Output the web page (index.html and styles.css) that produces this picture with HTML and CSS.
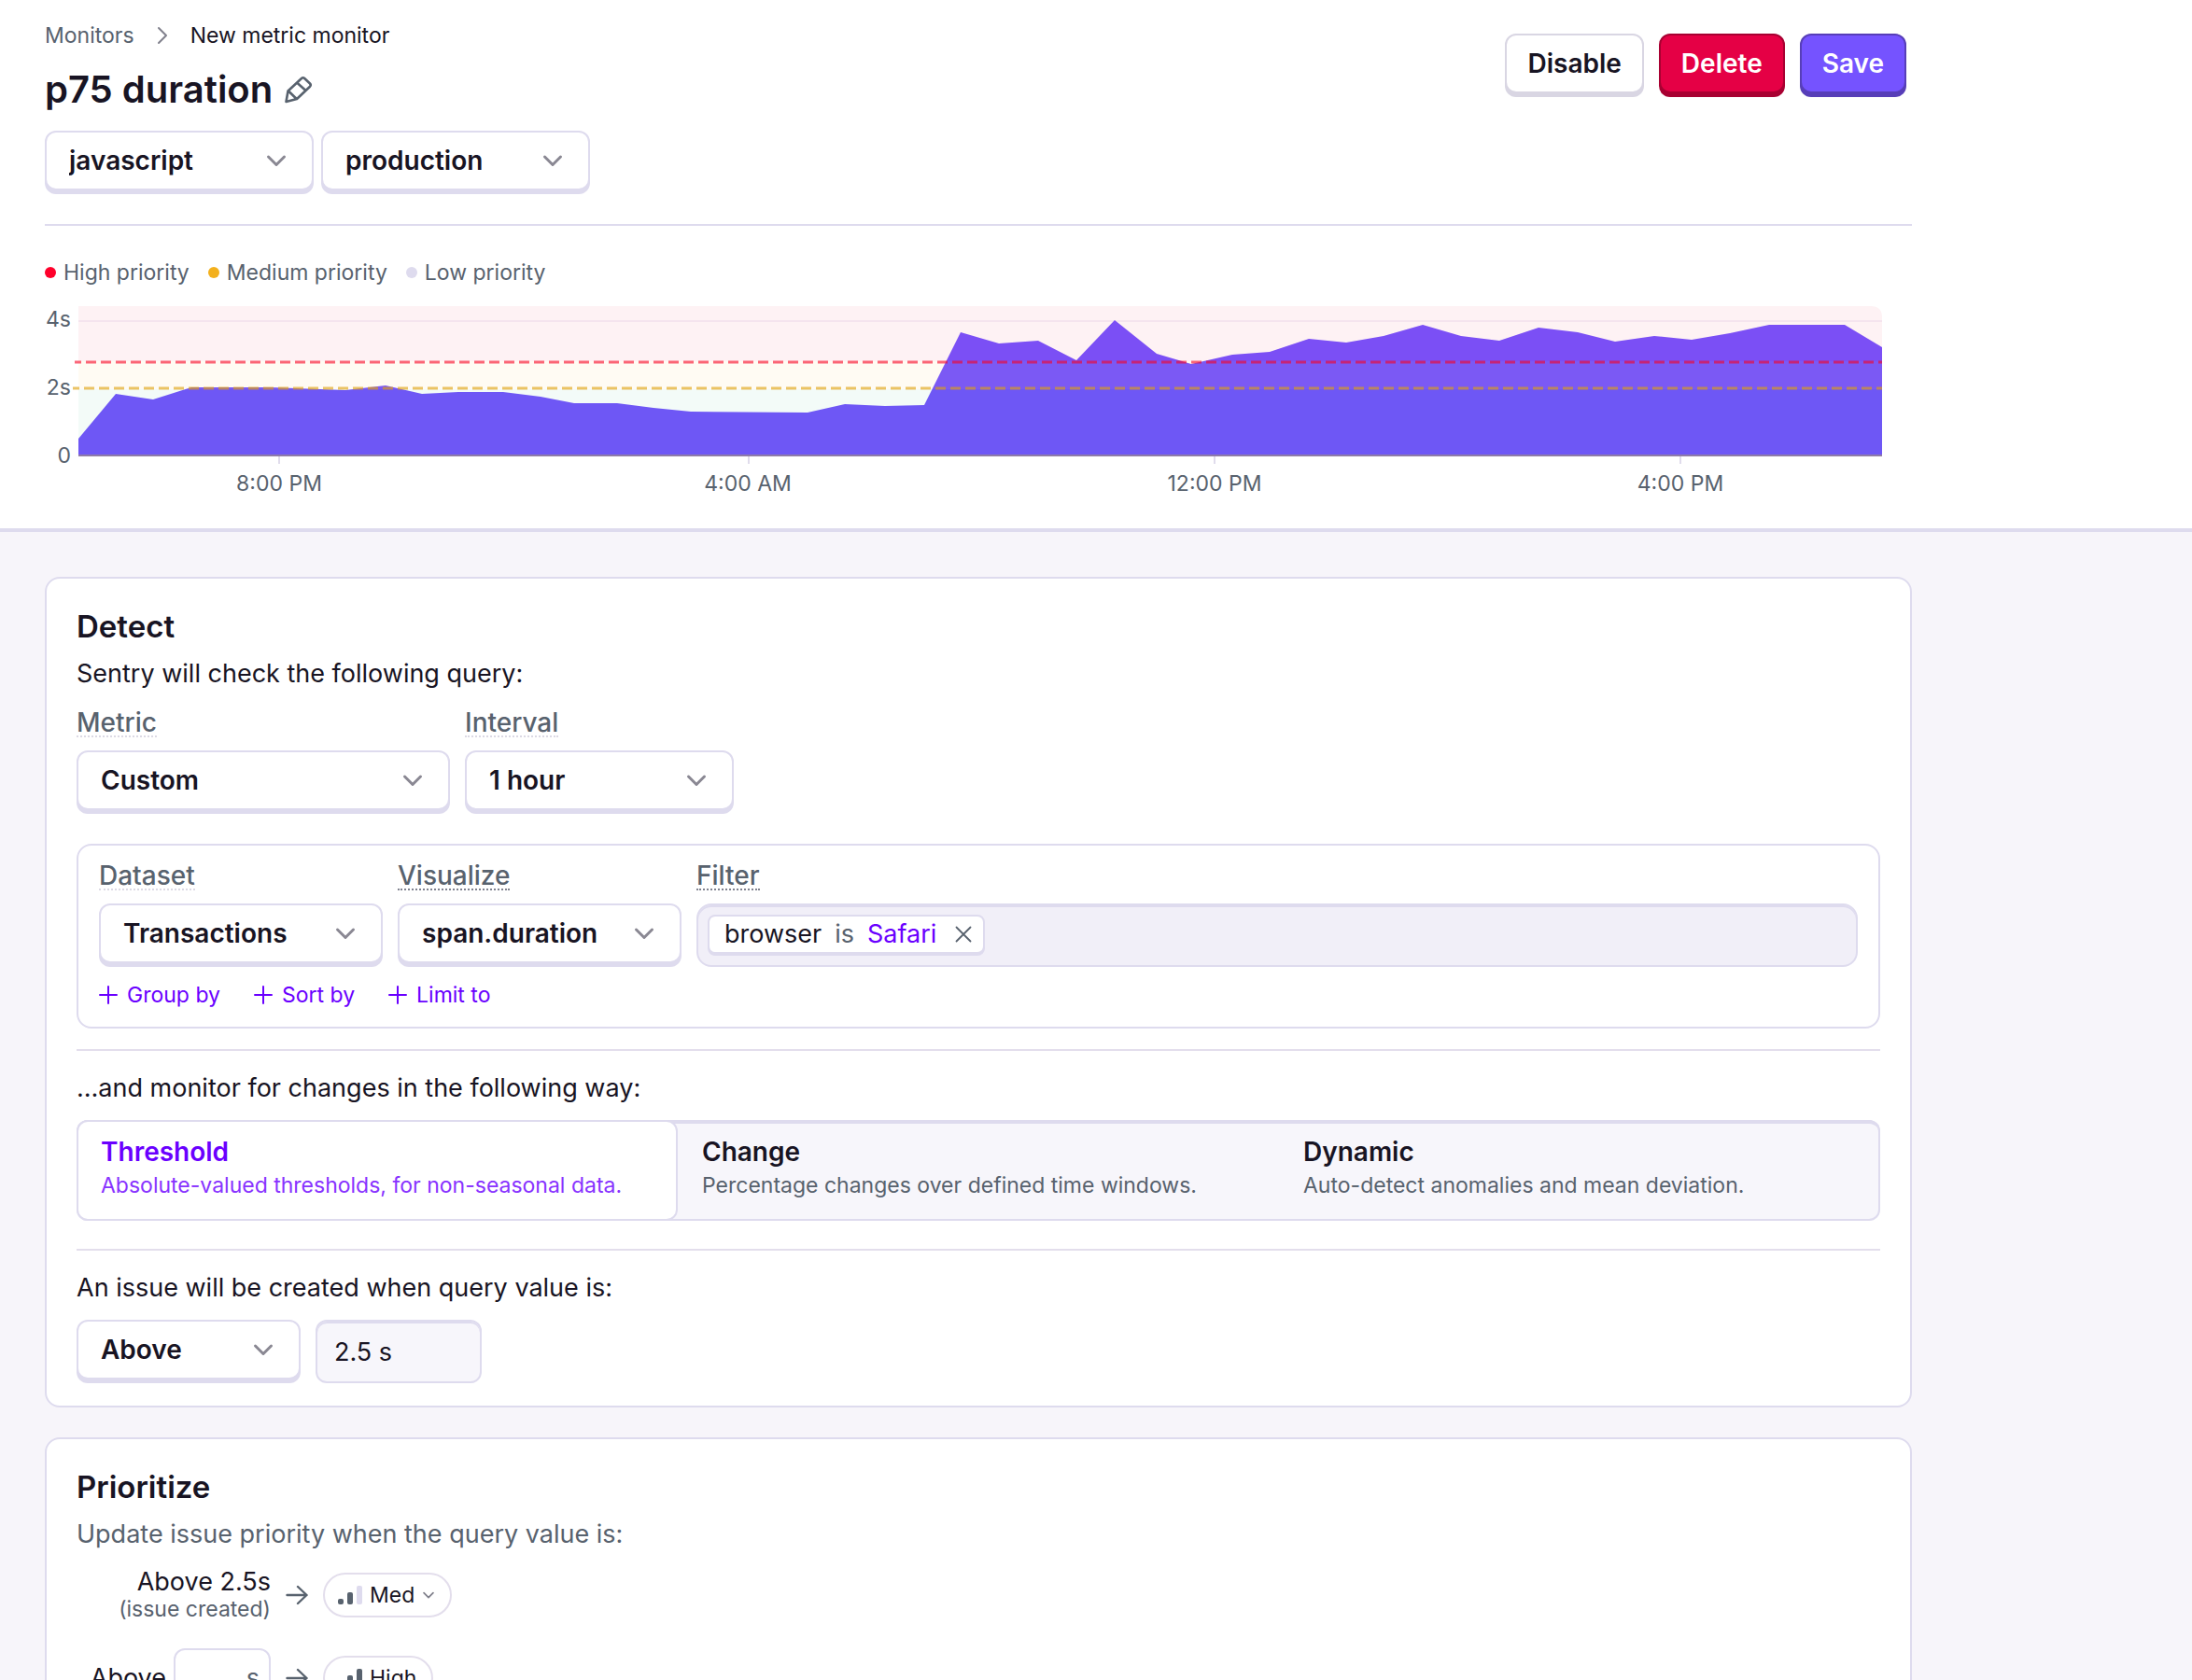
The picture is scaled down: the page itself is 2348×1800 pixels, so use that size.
FILE: index.html
```html
<!DOCTYPE html>
<html lang="en">
<head>
<meta charset="utf-8">
<meta name="viewport" content="width=device-width, initial-scale=1">
<title>p75 duration - New metric monitor</title>
<link rel="stylesheet" href="styles.css">
</head>
<body>
<svg class="sprite" aria-hidden="true">
  <symbol id="chevron" viewBox="0 0 24 24"><path d="M3.500 8l8.500 8.500L20.500 8" fill="none" stroke="currentColor" stroke-width="3" stroke-linecap="round" stroke-linejoin="round"/></symbol>
  <symbol id="plus" viewBox="0 0 20 20"><path d="M10 1v18M1 10h18" fill="none" stroke="currentColor" stroke-width="2" stroke-linecap="round"/></symbol>
  <symbol id="arrow" viewBox="0 0 24 24"><path d="M1.500 12h21M13 3l9.500 9-9.500 9" fill="none" stroke="currentColor" stroke-width="2.400" stroke-linecap="round" stroke-linejoin="round"/></symbol>
</svg>

<header class="top">
  <div class="container">
    <div class="top-row">
      <div class="top-info">
        <nav class="crumbs" aria-label="Breadcrumb">
          <a href="#">Monitors</a>
          <svg class="crumb-sep" viewBox="0 0 12 20" aria-hidden="true"><path d="M2 2l8 8-8 8" fill="none" stroke="currentColor" stroke-width="2" stroke-linecap="round" stroke-linejoin="round"/></svg>
          <span>New metric monitor</span>
        </nav>
        <div class="title-row">
          <h1>p75 duration</h1>
          <button class="icon-btn" type="button" aria-label="Edit name">
            <svg viewBox="0 0 32 32"><path d="M2.500 29l2-11.500L19 4q1.600-1.500 3.200 0l5.800 5.500q1.500 1.600 0 3.200L14 26zM14 8.500l9.500 8.500M5 17.500l8.700 8.500" fill="none" stroke="currentColor" stroke-width="2.600" stroke-linejoin="round"/></svg>
          </button>
        </div>
        <div class="row tight">
          <div class="select w-md">
            <select aria-label="Project"><option>javascript</option></select>
            <svg aria-hidden="true"><use href="#chevron"/></svg>
          </div>
          <div class="select w-md">
            <select aria-label="Environment"><option>production</option></select>
            <svg aria-hidden="true"><use href="#chevron"/></svg>
          </div>
        </div>
      </div>
      <div class="actions">
        <button class="btn" type="button">Disable</button>
        <button class="btn danger" type="button">Delete</button>
        <button class="btn primary" type="button">Save</button>
      </div>
    </div>

    <ul class="legend">
      <li class="high">High priority</li>
      <li class="medium">Medium priority</li>
      <li class="low">Low priority</li>
    </ul>
    <svg class="chart" viewBox="48 320 2000 220" role="img" aria-label="p75 duration over time">
      <defs>
        <clipPath id="series"><path d="M84 488V470L124 422L164 428L205 415L290 415L370 418L413 413L452 422L491 420L539 420L579 425L615 432L661 432L700 437L740 441L865 442L905 433L948 435L990 434L1029 356L1070 368L1112 365L1153 386L1194 343L1239 379L1276 390L1320 380L1360 377L1402 363L1442 367L1482 360L1524 348L1565 360L1606 365L1648 351L1690 356L1730 366L1772 360L1812 364L1853 357L1895 348L1976 348L2016 372V488Z"/></clipPath>
      </defs>
      <path d="M84 328H2004Q2016 328 2016 340V387H84Z" fill="#fef2f4"/>
      <rect x="84" y="387" width="1932" height="30" fill="#fffbf3"/>
      <rect x="84" y="417" width="1932" height="71" fill="#f3fbf8"/>
      <rect x="84" y="343" width="1932" height="2" fill="#f5e4ee"/>
      <g clip-path="url(#series)">
        <rect x="84" y="328" width="1932" height="59" fill="#7b4ff5"/>
        <rect x="84" y="387" width="1932" height="30" fill="#7b59f4"/>
        <rect x="84" y="417" width="1932" height="71" fill="#6e57f5"/>
      </g>
      <path d="M80 388H2016" stroke="#f90222" stroke-opacity=".6" stroke-width="3" stroke-dasharray="11 5" stroke-dashoffset="4"/>
      <path d="M78 416H2016" stroke="#dea00a" stroke-opacity=".62" stroke-width="3" stroke-dasharray="11 5" stroke-dashoffset="4"/>
      <rect x="84" y="487" width="1932" height="2" fill="#8e7ba8"/>
      <path d="M299 489v8M802 489v8M1301 489v8M1800 489v8" stroke="#e0dcec" stroke-width="2"/>
      <g class="axis y-axis">
        <text x="76" y="350">4s</text>
        <text x="76" y="423">2s</text>
        <text x="76" y="496">0</text>
      </g>
      <g class="axis x-axis">
        <text x="299" y="526">8:00 PM</text>
        <text x="801" y="526">4:00 AM</text>
        <text x="1301" y="526">12:00 PM</text>
        <text x="1800" y="526">4:00 PM</text>
      </g>
    </svg>
  </div>
</header>

<main class="main">
  <div class="container cards">
    <section class="card">
      <h2>Detect</h2>
      <p class="lead">Sentry will check the following query:</p>
      <div class="row fields">
        <div class="field">
          <label for="metric">Metric</label>
          <div class="select w-xl"><select id="metric"><option>Custom</option></select><svg aria-hidden="true"><use href="#chevron"/></svg></div>
        </div>
        <div class="field">
          <label for="interval">Interval</label>
          <div class="select w-md"><select id="interval"><option>1 hour</option></select><svg aria-hidden="true"><use href="#chevron"/></svg></div>
        </div>
      </div>

      <div class="query">
        <div class="row">
          <div class="field">
            <label for="dataset">Dataset</label>
            <div class="select w-lg"><select id="dataset"><option>Transactions</option></select><svg aria-hidden="true"><use href="#chevron"/></svg></div>
          </div>
          <div class="field">
            <label class="strong" for="visualize">Visualize</label>
            <div class="select w-lg"><select id="visualize"><option>span.duration</option></select><svg aria-hidden="true"><use href="#chevron"/></svg></div>
          </div>
          <div class="field grow">
            <label class="strong" for="filter">Filter</label>
            <div class="filter">
              <span class="chip">
                <span>browser</span>
                <span class="op">is</span>
                <span class="val">Safari</span>
                <button type="button" aria-label="Remove filter"><svg viewBox="0 0 18 18"><path d="M1.500 1.500l15 15M16.500 1.500l-15 15" fill="none" stroke="currentColor" stroke-width="1.800" stroke-linecap="round"/></svg></button>
              </span>
              <input id="filter" type="text">
            </div>
          </div>
        </div>
        <div class="adders">
          <button type="button"><svg aria-hidden="true"><use href="#plus"/></svg>Group by</button>
          <button type="button"><svg aria-hidden="true"><use href="#plus"/></svg>Sort by</button>
          <button type="button"><svg aria-hidden="true"><use href="#plus"/></svg>Limit to</button>
        </div>
      </div>

      <hr>
      <p class="step">…and monitor for changes in the following way:</p>
      <div class="segments" role="radiogroup" aria-label="Detection type">
        <label class="segment"><input type="radio" name="kind" checked><strong>Threshold</strong><span>Absolute-valued thresholds, for non-seasonal data.</span></label>
        <label class="segment"><input type="radio" name="kind"><strong>Change</strong><span>Percentage changes over defined time windows.</span></label>
        <label class="segment"><input type="radio" name="kind"><strong>Dynamic</strong><span>Auto-detect anomalies and mean deviation.</span></label>
      </div>

      <hr class="after-segments">
      <p class="step">An issue will be created when query value is:</p>
      <div class="row">
        <div class="select w-sm"><select aria-label="Comparison"><option>Above</option></select><svg aria-hidden="true"><use href="#chevron"/></svg></div>
        <input class="value" type="text" value="2.5 s" aria-label="Threshold value">
      </div>
    </section>

    <section class="card">
      <h2>Prioritize</h2>
      <p class="lead muted">Update issue priority when the query value is:</p>
      <div class="rule">
        <div class="cond stacked"><span>Above 2.5s</span><small>(issue created)</small></div>
        <svg class="arrow" aria-hidden="true"><use href="#arrow"/></svg>
        <button class="pill" type="button">
          <svg class="bars" viewBox="0 0 26 20" aria-hidden="true"><rect y="14" width="6" height="6" rx="2"/><rect x="10" y="7" width="6" height="13" rx="2"/><rect class="off" x="20" width="6" height="20" rx="2"/></svg>
          Med
          <svg class="caret" aria-hidden="true"><use href="#chevron"/></svg>
        </button>
      </div>
      <div class="rule">
        <div class="cond">
          <label for="high">Above</label>
          <span class="unit-box"><input id="high" type="text"><span>s</span></span>
        </div>
        <svg class="arrow" aria-hidden="true"><use href="#arrow"/></svg>
        <button class="pill" type="button">
          <svg class="bars" viewBox="0 0 26 20" aria-hidden="true"><rect y="14" width="6" height="6" rx="2"/><rect x="10" y="7" width="6" height="13" rx="2"/><rect x="20" width="6" height="20" rx="2"/></svg>
          High
        </button>
      </div>
    </section>
  </div>
</main>
</body>
</html>
```
FILE: styles.css
```css
:root {
  --ink: #181423;
  --muted: #58626e;
  --line: #dedbee;
  --rule: #e3deec;
  --accent: #6a00ff;
  --surface: #f7f5fa;
}

* { box-sizing: border-box; }

body {
  margin: 0;
  background: var(--surface);
  color: var(--ink);
  font-family: Inter, "Liberation Sans", sans-serif;
  font-size: 27px;
  line-height: 32px;
}

h1, h2, p, ul { margin: 0; padding: 0; }
button, input, select { font: inherit; color: inherit; margin: 0; }
button { cursor: pointer; }
svg { display: block; flex: none; }
.sprite { display: none; }

.container { max-width: 2000px; margin: 0 48px; }

/* Page header */
.top {
  background: #fff;
  border-bottom: 4px solid var(--line);
  padding: 24px 0 26px;
}
.top-row {
  display: flex;
  justify-content: space-between;
  align-items: flex-start;
  padding-bottom: 32px;
  border-bottom: 2px solid var(--line);
}
.top-info { display: flex; flex-direction: column; gap: 22px; }
.crumbs {
  display: flex;
  align-items: center;
  gap: 24px;
  font-size: 23px;
  line-height: 28px;
}
.crumbs a { color: var(--muted); text-decoration: none; }
.crumb-sep { width: 12px; height: 20px; color: #80808c; }
.title-row { display: flex; align-items: center; gap: 12px; }
h1 { font-size: 40px; line-height: 44px; font-weight: 600; }
.icon-btn { border: 0; padding: 0; background: none; color: var(--muted); }
.icon-btn svg { width: 32px; height: 32px; }

.row { display: flex; gap: 16px; }
.row.tight { gap: 8px; }

.actions { display: flex; gap: 16px; padding: 12px 6px 0 0; }
.btn {
  height: 64px;
  padding: 0 22px;
  border: 2px solid #d9d6e3;
  border-radius: 12px;
  box-shadow: 0 4px 0 #d9d6e3;
  background: #fff;
  font-size: 28px;
  font-weight: 600;
}
.btn.danger { background: #e50045; border-color: #a80032; box-shadow: 0 4px 0 #a80032; color: #fff; }
.btn.primary { background: #7553ff; border-color: #573eb8; box-shadow: 0 4px 0 #573eb8; color: #fff; }

/* Drop-downs */
.select { position: relative; margin-bottom: 4px; }
.select select {
  width: 100%;
  height: 64px;
  padding: 0 60px 0 24px;
  border: 2px solid var(--line);
  border-radius: 12px;
  box-shadow: 0 4px 0 var(--line);
  background: #fff;
  font-size: 28px;
  font-weight: 600;
  appearance: none;
}
.select svg {
  position: absolute;
  right: 28px;
  top: 20px;
  width: 24px;
  height: 24px;
  color: #8a8893;
  pointer-events: none;
}
.w-sm { width: 240px; }
.w-md { width: 288px; }
.w-lg { width: 304px; }
.w-xl { width: 400px; }

/* Chart */
.legend {
  display: flex;
  gap: 20px;
  margin-top: 36px;
  list-style: none;
  font-size: 23px;
  line-height: 28px;
  color: var(--muted);
}
.legend li { display: flex; align-items: center; gap: 8px; }
.legend li::before { content: ""; width: 12px; height: 12px; border-radius: 50%; background: var(--line); }
.legend .high::before { background: #ff002b; }
.legend .medium::before { background: #f3b01c; }
.chart { width: 100%; height: auto; margin-top: 14px; }
.axis { font-size: 23px; fill: var(--muted); }
.y-axis { text-anchor: end; }
.x-axis { text-anchor: middle; }

/* Cards */
.main { padding: 48px 0; }
.cards { display: flex; flex-direction: column; gap: 32px; }
.card {
  padding: 30px 32px 24px;
  border: 2px solid var(--line);
  border-radius: 16px;
  background: #fff;
}
h2 { font-size: 33px; line-height: 42px; font-weight: 600; }
.lead { margin-top: 14px; }
.muted { color: var(--muted); }
.fields { margin-top: 22px; }

.field { display: flex; flex-direction: column; align-items: flex-start; gap: 14px; }
.field.grow { flex: 1; align-items: stretch; }
.field > label {
  align-self: flex-start;
  border-bottom: 2px dotted #dcd9e4;
  color: var(--muted);
  font-size: 28px;
  font-weight: 500;
  line-height: 28px;
}
.field > label.strong { border-color: #80828f; }

.query {
  margin-top: 32px;
  padding: 18px 22px 20px;
  border: 2px solid var(--line);
  border-radius: 16px;
}
.filter {
  display: flex;
  height: 68px;
  padding: 10px;
  border: 2px solid var(--line);
  border-radius: 16px;
  box-shadow: inset 0 2px 0 var(--line);
  background: #f1eff8;
}
.filter input { flex: 1; min-width: 0; border: 0; background: none; outline: 0; }
.chip {
  display: flex;
  align-items: center;
  gap: 14px;
  height: 42px;
  padding: 0 12px 0 16px;
  border: 2px solid var(--line);
  border-radius: 8px;
  box-shadow: 0 2px 0 var(--line);
  background: #fff;
}
.chip .op { color: var(--muted); }
.chip .val { color: var(--accent); }
.chip button { border: 0; padding: 0 0 0 6px; background: none; color: var(--muted); }
.chip button svg { width: 18px; height: 18px; }

.adders { display: flex; gap: 36px; margin-top: 16px; }
.adders button {
  display: flex;
  align-items: center;
  gap: 10px;
  padding: 0;
  border: 0;
  background: none;
  color: var(--accent);
  font-size: 23px;
  line-height: 28px;
}
.adders svg { width: 20px; height: 20px; }

hr { margin: 22px 0 0; border: 0; border-top: 2px solid var(--rule); }
hr.after-segments { margin-top: 30px; }
.step { margin: 24px 0 18px; }

.segments {
  display: grid;
  grid-template-columns: repeat(3, 1fr);
  border-radius: 12px;
  box-shadow: inset 0 0 0 2px var(--line), inset 0 4px 0 var(--line);
  background: #f7f6fb;
}
.segment {
  position: relative;
  display: flex;
  flex-direction: column;
  gap: 6px;
  padding: 16px 24px 22px;
  border: 2px solid transparent;
  border-radius: 12px;
}
.segment input { position: absolute; inset: 0; margin: 0; opacity: 0; }
.segment strong { font-size: 28px; font-weight: 600; line-height: 32px; }
.segment span { font-size: 23px; line-height: 28px; color: var(--muted); }
.segment:has(:checked) { border-color: var(--line); background: #fff; color: var(--accent); }
.segment:has(:checked) span { color: #8833ff; }

.value {
  width: 178px;
  height: 68px;
  padding: 0 18px;
  border: 2px solid var(--line);
  border-radius: 12px;
  box-shadow: inset 0 2px 0 var(--line);
  background: #f7f6fb;
}

/* Priority rules */
.rule { display: flex; align-items: center; gap: 16px; margin-top: 20px; }
.rule + .rule { margin-top: 28px; }
.cond { display: flex; justify-content: flex-end; align-items: center; gap: 8px; width: 208px; }
.cond.stacked { flex-direction: column; align-items: flex-end; gap: 0; line-height: 30px; }
.cond small { font-size: 23px; line-height: 28px; color: var(--muted); }
.arrow { width: 24px; height: 24px; color: var(--muted); }
.pill {
  display: flex;
  align-items: center;
  gap: 8px;
  height: 48px;
  padding: 0 16px 0 14px;
  border: 2px solid var(--rule);
  border-radius: 24px;
  background: #fff;
  font-size: 23px;
}
.bars { width: 26px; height: 20px; fill: var(--muted); }
.bars .off { fill: var(--line); }
.caret { width: 14px; height: 14px; color: #80808c; }
.unit-box {
  display: flex;
  align-items: center;
  width: 104px;
  height: 64px;
  padding: 0 10px;
  border: 2px solid var(--line);
  border-radius: 12px;
  color: var(--muted);
}
.unit-box input { flex: 1; min-width: 0; width: 100%; padding: 0; border: 0; background: none; outline: 0; }
```
